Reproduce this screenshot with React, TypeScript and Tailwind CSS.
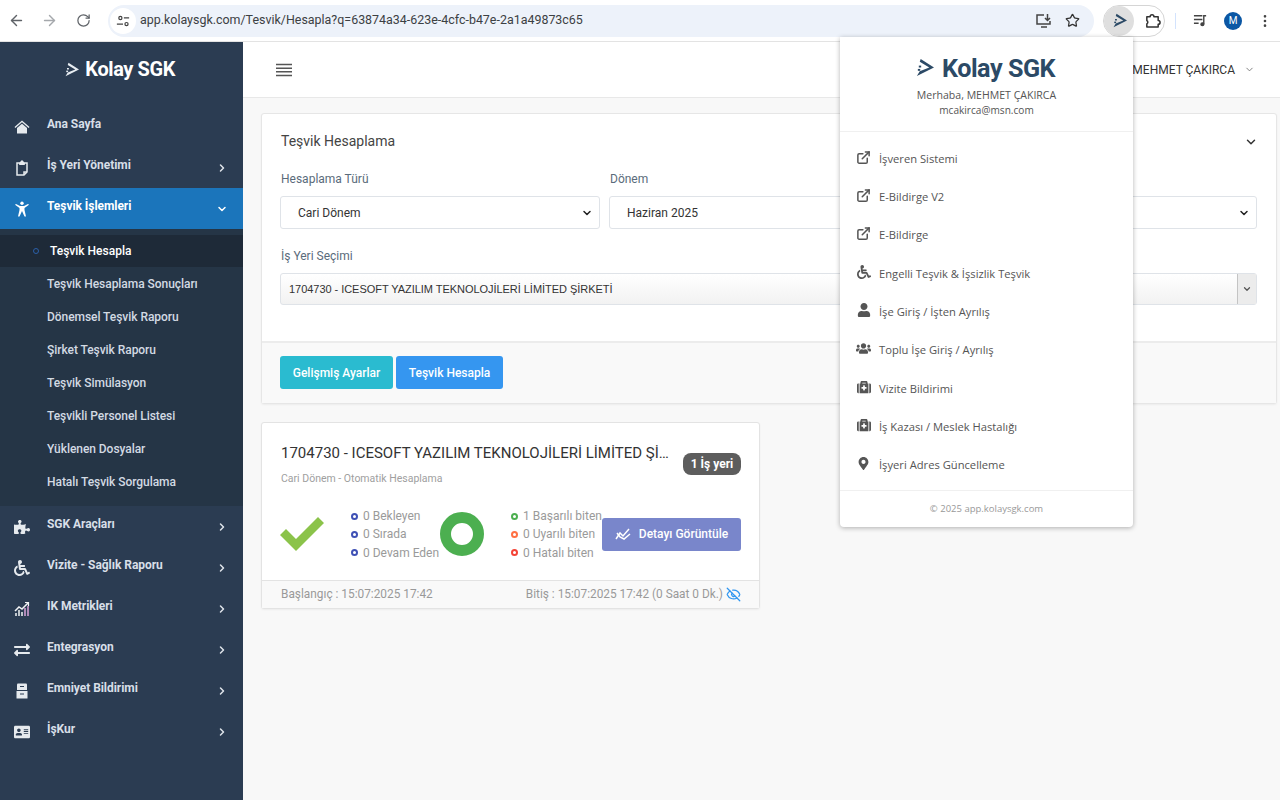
import React from "react";
import {
  ArrowLeft,
  ArrowRight,
  RotateCw,
  Star,
  MoreVertical,
  ChevronDown,
  ChevronRight,
  ExternalLink,
  EyeOff,
} from "lucide-react";
import {
  FaPuzzlePiece,
  FaWheelchair,
  FaExchangeAlt,
  FaAddressCard,
  FaUser,
  FaUsers,
  FaMedkit,
  FaMapMarkerAlt,
} from "react-icons/fa";

const sans = "font-['Roboto',sans-serif]";

function LogoMark({ className }: { className: string }) {
  return (
    <svg viewBox="0 0 20 20" className={className} fill="currentColor">
      <path d="M6 1 L20 10 L2 19 L5 14 L15 10 L5 4 Z" />
      <rect x="4" y="8" width="2.500" height="2" />
      <rect x="3" y="11.500" width="2.500" height="2" />
    </svg>
  );
}

function HomeIcon({ className }: { className: string }) {
  return (
    <svg viewBox="0 0 16 16" className={className} fill="currentColor">
      <path d="M8 1.500 L15.500 8 L14.600 9 L8 3.300 L1.400 9 L.5 8 Z" />
      <path d="M3 9 L8 4.800 L13 9 V14.500 H3 Z" />
    </svg>
  );
}

function ClipIcon({ className }: { className: string }) {
  return (
    <svg viewBox="0 0 16 16" className={className} fill="none" stroke="currentColor" strokeWidth="1.500">
      <path d="M5 3H3v12h7l3-3V3h-2" />
      <path d="M10 15v-3h3" />
      <path d="M5.500 4.500V2.500h1.500V1h2v1.500h1.500v2z" fill="currentColor" strokeWidth="1" />
    </svg>
  );
}

function PersonIcon({ className }: { className: string }) {
  return (
    <svg viewBox="0 0 16 16" className={className} fill="currentColor">
      <circle cx="8" cy="2.200" r="1.700" />
      <path d="M1 3.800 L2 3 L6 5 H10 L14 3 L15 3.800 L10.500 7 V9 L12 15.500 H10.500 L8 10 L5.500 15.500 H4 L5.500 9 V7 Z" />
    </svg>
  );
}

function ChartIcon({ className }: { className: string }) {
  return (
    <svg viewBox="0 0 16 16" className={className} fill="none">
      <path d="M1 10 L5 6 L8 8 L14 2" stroke="#f1f3f5" strokeWidth="1.500" />
      <path d="M11 1.500h3.500V5" stroke="#f1f3f5" strokeWidth="1.200" />
      <path d="M2 15v-3M5 15V9M8 15v-4" stroke="#f1f3f5" strokeWidth="1.500" />
      <path d="M11 15V7M14 15V5" stroke="#d9a3d9" strokeWidth="1.500" />
    </svg>
  );
}

function SafeIcon({ className }: { className: string }) {
  return (
    <svg viewBox="0 0 16 16" className={className} fill="currentColor">
      <path d="M3 1.500 Q3 .5 4 .5 H12 Q13 .5 13 1.500 V7 H3 Z" />
      <path d="M2.500 8 H13.500 V15.500 H2.500 Z" />
      <path d="M6 3.500h4M6 11h4" stroke="#2b3c52" strokeWidth="1.200" />
    </svg>
  );
}

function ZigzagIcon({ className }: { className: string }) {
  return (
    <svg viewBox="0 0 16 16" className={className} fill="none" stroke="currentColor" strokeWidth="1.500">
      <path d="M1 13 L5 7 L8 10 L14 3" />
      <path d="M2 7 L5 11 L9 13 L15 8" />
    </svg>
  );
}

function Bar() {
  return (
    <div className="h-[42px] bg-white border-b border-[#e3e3e3] flex items-center shrink-0 font-['Roboto',sans-serif]">
      <ArrowLeft className="w-[17px] h-[17px] ml-[8px] text-[#5f6368]" />
      <ArrowRight className="w-[17px] h-[17px] ml-[16px] text-[#a5a8ac]" />
      <RotateCw className="w-[15px] h-[15px] ml-[18px] text-[#5f6368]" />
      <div className="ml-[17px] w-[986px] h-[32px] rounded-full bg-[#edf2fa] flex items-center">
        <div className="w-[26px] h-[26px] ml-[2px] rounded-full bg-white flex items-center justify-center">
          <svg viewBox="0 0 16 16" className="w-[14px] h-[14px] text-[#444]" fill="none" stroke="currentColor" strokeWidth="1.400">
            <circle cx="5" cy="4.500" r="1.800" />
            <path d="M9 4.500h6M1 11.500h7" />
            <circle cx="12" cy="11.500" r="1.800" />
          </svg>
        </div>
        <span className="ml-[4px] text-[12.450px] text-[#3c4043]">
          app.kolaysgk.com/Tesvik/Hesapla?q=63874a34-623e-4cfc-b47e-2a1a49873c65
        </span>
        <svg viewBox="0 0 18 18" className="w-[18px] h-[18px] ml-auto text-[#444]" fill="none" stroke="currentColor" strokeWidth="1.500">
          <path d="M9 3H2v9h13V9M6 15h6M12.500 2v6M10 6l2.500 2.500L15 6" />
        </svg>
        <Star className="w-[15px] h-[15px] ml-[12px] mr-[14px] text-[#333]" strokeWidth={2} />
      </div>
      <div className="ml-[9px] w-[62px] h-[32px] rounded-full border border-[#d5d5d5] flex items-center">
        <div className="w-[30px] h-[30px] rounded-full bg-[#dfdfdf] flex items-center justify-center text-[#2c4a66]">
          <LogoMark className="w-[15px] h-[15px]" />
        </div>
        <svg viewBox="0 0 18 18" className="w-[17px] h-[17px] ml-[10px] text-[#333]" fill="none" stroke="currentColor" strokeWidth="1.600" strokeLinejoin="round">
          <path d="M3 5h3.500a2 2 0 1 1 4 0H15v4a2 2 0 0 1 0 4v3H3v-3.500a2 2 0 0 0 0-3.500z" />
        </svg>
      </div>
      <div className="ml-[10px] w-px h-[16px] bg-[#d3e3fd]" />
      <svg viewBox="0 0 16 16" className="w-[15px] h-[15px] ml-[17px] text-[#444]" fill="none" stroke="currentColor" strokeWidth="1.500">
        <path d="M1 3h9M1 7h9M1 11h5M14 3h-2.500v9" />
        <circle cx="10" cy="12" r="1.500" fill="currentColor" />
      </svg>
      <div className="ml-[16px] w-[18px] h-[18px] rounded-full bg-[#0b57a4] text-white text-[10px] flex items-center justify-center">M</div>
      <MoreVertical className="w-[16px] h-[16px] ml-[15px] text-[#444]" />
    </div>
  );
}

const topItems = [
  { label: "Ana Sayfa", Icon: HomeIcon, arrow: false },
  { label: "İş Yeri Yönetimi", Icon: ClipIcon, arrow: true },
];

const subItems = [
  "Teşvik Hesaplama Sonuçları",
  "Dönemsel Teşvik Raporu",
  "Şirket Teşvik Raporu",
  "Teşvik Simülasyon",
  "Teşvikli Personel Listesi",
  "Yüklenen Dosyalar",
  "Hatalı Teşvik Sorgulama",
];

const bottomItems = [
  { label: "SGK Araçları", Icon: FaPuzzlePiece },
  { label: "Vizite - Sağlık Raporu", Icon: FaWheelchair },
  { label: "IK Metrikleri", Icon: ChartIcon },
  { label: "Entegrasyon", Icon: FaExchangeAlt },
  { label: "Emniyet Bildirimi", Icon: SafeIcon },
  { label: "İşKur", Icon: FaAddressCard },
];

function NavRow({ label, Icon, arrow }: { label: string; Icon: React.ElementType; arrow: boolean }) {
  return (
    <div className="h-[41px] flex items-center pl-[14px] pr-[15px] text-[#d8dfe8]">
      <Icon className="w-[16px] h-[16px] text-[#e6eaee] shrink-0" />
      <span className="ml-[17px] text-[12px] font-bold -mt-[5px] tracking-[-0.05px]">{label}</span>
      {arrow && <ChevronRight className="w-[12px] h-[12px] ml-auto text-[#dfe4ea]" strokeWidth={3} />}
    </div>
  );
}

function Sidebar() {
  return (
    <aside className={`w-[243px] shrink-0 bg-[#2b3c52] ${sans}`}>
      <div className="h-[55px] flex items-center justify-center text-white -translate-x-[1px]">
        <LogoMark className="w-[15px] h-[15px] mr-[4px] text-[#e8edf2]" />
        <span className="text-[21px] font-bold tracking-[-0.4px] scale-x-[0.95]">Kolay SGK</span>
      </div>
      <div className="pt-[9px]">
        {topItems.map((item) => (
          <NavRow key={item.label} {...item} />
        ))}
        <div className="h-[41px] flex items-center pl-[14px] pr-[15px] bg-[#1b75bb] text-white">
          <PersonIcon className="w-[16px] h-[16px] shrink-0" />
          <span className="ml-[17px] text-[12px] font-bold -mt-[5px] tracking-[-0.05px]">Teşvik İşlemleri</span>
          <ChevronDown className="w-[12px] h-[12px] ml-auto" strokeWidth={3} />
        </div>
        <div className="bg-[#253546] pt-[6px] pb-[8px]">
          <div className="h-[32px] bg-[#1e2a38] flex items-center pl-[33px] text-white">
            <span className="w-[6px] h-[6px] rounded-full border border-[#2a5fa8]" />
            <span className="ml-[11px] text-[12px] font-medium">Teşvik Hesapla</span>
          </div>
          {subItems.map((s) => (
            <div key={s} className="h-[33px] flex items-center pl-[47px] text-[12px] font-medium text-[#d3dae3] tracking-[-0.05px]">
              {s}
            </div>
          ))}
        </div>
        {bottomItems.map((item) => (
          <NavRow key={item.label} {...item} arrow />
        ))}
      </div>
    </aside>
  );
}

function Field({ label, value, className }: { label: string; value: string; className: string }) {
  return (
    <div className={className}>
      <div className="pl-[1px] text-[12px] text-[#5a6b7b] h-[17px] leading-[17px]">{label}</div>
      <div className="mt-[8px] h-[33px] rounded-[3px] border border-[#dfe3e8] bg-white flex items-center pl-[17px] pr-[6px] text-[12px] text-[#333]">
        {value}
        <ChevronDown className="w-[12px] h-[12px] ml-auto text-[#222]" strokeWidth={3} />
      </div>
    </div>
  );
}

function Dot({ color, text }: { color: string; text: string }) {
  return (
    <div className="flex items-center h-[18.300px] text-[12px] text-[#9a9a9a] whitespace-nowrap">
      <span className={`w-[7px] h-[7px] rounded-full border-2 ${color} mr-[5px]`} />
      {text}
    </div>
  );
}

function Main() {
  return (
    <main className={`flex-1 min-w-0 flex flex-col ${sans}`}>
      <div className="h-[56px] bg-white border-b border-[#e8e8e8] flex items-center px-[33px] shrink-0">
        <svg viewBox="0 0 16 14" className="w-[16px] h-[14px] text-[#555]" fill="none" stroke="currentColor" strokeWidth="1.400">
          <path d="M0 1.500h16M0 5.200h16M0 8.800h16M0 12.500h16" />
        </svg>
        <span className="ml-auto text-[12px] text-[#333]">MEHMET ÇAKIRCA</span>
        <ChevronDown className="w-[11px] h-[11px] ml-[9px] -mr-[8px] text-[#777]" />
      </div>
      <div className="flex-1 bg-[#f8f8f8] pl-[18px] pt-[15px]">
        <div className="w-[1016px] rounded-[3px] border border-[#e6e6e6] bg-white shadow-[0_1px_2px_rgba(0,0,0,0.05)]">
          <div className="pl-[18px] pr-[19px] pt-[18px] pb-[36px]">
            <div className="flex items-center h-[19px] pl-[1px]">
              <span className="text-[14px] text-[#444]">Teşvik Hesaplama</span>
              <ChevronDown className="w-[14px] h-[14px] ml-auto -mr-[1px] text-[#333]" strokeWidth={2.500} />
            </div>
            <div className="flex gap-[9px] mt-[20px]">
              <Field className="w-[320px]" label="Hesaplama Türü" value="Cari Dönem" />
              <Field className="w-[320px]" label="Dönem" value="Haziran 2025" />
              <Field className="flex-1" label="" value="" />
            </div>
            <div className="pl-[1px] text-[12px] text-[#5a6b7b] mt-[19px] h-[17px] leading-[17px]">İş Yeri Seçimi</div>
            <div className="mt-[8px] h-[32px] rounded-[3px] border border-[#dfe3e8] bg-gradient-to-b from-white to-[#f2f2f2] flex items-center pl-[8px] text-[11px] text-[#333] font-['Liberation_Sans',sans-serif] tracking-[-0.04px]">
              1704730 - ICESOFT YAZILIM TEKNOLOJİLERİ LİMİTED ŞİRKETİ
              <div className="ml-auto w-[19px] h-full border-l border-[#c4c4c4] bg-[#ececec] flex items-center justify-center">
                <ChevronDown className="w-[10px] h-[10px] text-[#555]" strokeWidth={3} />
              </div>
            </div>
          </div>
          <div className="h-[62px] pb-[1px] border-t-2 border-[#ececec] bg-[#f9f9f9] flex items-center px-[18px] gap-[3px]">
            <button className="h-[33px] w-[113px] rounded-[3px] bg-[#2abbd0] text-white text-[12px] font-medium">Gelişmiş Ayarlar</button>
            <button className="h-[33px] w-[107px] rounded-[3px] bg-[#3596f0] text-white text-[12px] font-medium">Teşvik Hesapla</button>
          </div>
        </div>

        <div className="w-[499px] mt-[18px] rounded-[3px] border border-[#e3e3e3] bg-white shadow-[0_1px_2px_rgba(0,0,0,0.05)]">
          <div className="pl-[19px] pr-[18px] pt-[19px] h-[157px]">
            <div className="flex items-start">
              <div className="w-[394px] min-w-0">
                <div className="text-[15px] leading-[22px] text-[#333] truncate">1704730 - ICESOFT YAZILIM TEKNOLOJİLERİ LİMİTED ŞİRKETİ</div>
                <div className="text-[10.500px] text-[#a0a0a0] mt-[7px] leading-[16px]">Cari Dönem - Otomatik Hesaplama</div>
              </div>
              <span className="ml-auto mt-[11px] h-[22px] w-[58px] rounded-[8px] bg-[#5d5d5d] text-white text-[12px] font-bold flex items-center justify-center">1 İş yeri</span>
            </div>
            <div className="flex items-center mt-[20px]">
              <svg viewBox="0 0 44 34" className="w-[44px] h-[34px] -ml-[1px] text-[#8bc34a]" fill="currentColor">
                <path d="M0 18 L6 12 L16 22 L38 0 L44 6 L16 34 Z" />
              </svg>
              <div className="ml-[27px] w-[89px]">
                <Dot color="border-[#3f51b5]" text="0 Bekleyen" />
                <Dot color="border-[#3f51b5]" text="0 Sırada" />
                <Dot color="border-[#3f51b5]" text="0 Devam Eden" />
              </div>
              <div className="w-[44px] h-[44px] rounded-full border-[11px] border-[#4caf50]" />
              <div className="ml-[27px] w-[91px]">
                <Dot color="border-[#4caf50]" text="1 Başarılı biten" />
                <Dot color="border-[#ff7043]" text="0 Uyarılı biten" />
                <Dot color="border-[#f44336]" text="0 Hatalı biten" />
              </div>
              <button className="ml-auto h-[33px] w-[139px] rounded-[3px] bg-[#7986cb] text-white text-[12px] font-medium flex items-center justify-center gap-[8px]">
                <ZigzagIcon className="w-[16px] h-[16px]" />
                Detayı Görüntüle
              </button>
            </div>
          </div>
          <div className="h-[28px] border-t border-[#e3e3e3] bg-[#f9f9f9] flex items-center pl-[19px] pr-[18px] text-[11.850px] text-[#999]">
            <span>Başlangıç : 15:07:2025 17:42</span>
            <span className="ml-auto">Bitiş : 15:07:2025 17:42 (0 Saat 0 Dk.)</span>
            <EyeOff className="w-[15px] h-[15px] ml-[3px] text-[#2f96f0]" />
          </div>
        </div>
      </div>
    </main>
  );
}

const popItems = [
  { label: "İşveren Sistemi", Icon: ExternalLink, size: "w-[15px] h-[15px]" },
  { label: "E-Bildirge V2", Icon: ExternalLink, size: "w-[15px] h-[15px]" },
  { label: "E-Bildirge", Icon: ExternalLink, size: "w-[15px] h-[15px]" },
  { label: "Engelli Teşvik & İşsizlik Teşvik", Icon: FaWheelchair, size: "w-[14px] h-[14px]" },
  { label: "İşe Giriş / İşten Ayrılış", Icon: FaUser, size: "w-[14px] h-[14px]" },
  { label: "Toplu İşe Giriş / Ayrılış", Icon: FaUsers, size: "w-[17px] h-[17px]" },
  { label: "Vizite Bildirimi", Icon: FaMedkit, size: "w-[14px] h-[14px]" },
  { label: "İş Kazası / Meslek Hastalığı", Icon: FaMedkit, size: "w-[14px] h-[14px]" },
  { label: "İşyeri Adres Güncelleme", Icon: FaMapMarkerAlt, size: "w-[13px] h-[13px]" },
];

function Popup() {
  return (
    <div className="absolute left-[840px] top-[37px] w-[293px] h-[490px] bg-white rounded-b-[4px] shadow-[0_1px_5px_rgba(0,0,0,0.3)] font-['Open_Sans',sans-serif] flex flex-col">
      <div className="h-[95px] border-b border-[#f0f0f0] flex flex-col items-center pt-[14px] shrink-0">
        <div className="flex items-center text-[#2c4a66] h-[33px]">
          <LogoMark className="w-[19px] h-[19px] mr-[5px]" />
          <span className={`text-[26.500px] font-bold tracking-[-0.5px] scale-x-[0.95] ${sans}`}>Kolay SGK</span>
        </div>
        <div className="text-[10.550px] text-[#555] mt-[4px] leading-[15px]">Merhaba, MEHMET ÇAKIRCA</div>
        <div className="text-[10.100px] text-[#555] leading-[15px]">mcakirca@msn.com</div>
      </div>
      <div className="flex-1 pt-[8px] pl-[16px]">
        {popItems.map(({ label, Icon, size }) => (
          <div key={label} className="h-[38.300px] flex items-center text-[11.200px] text-[#555]">
            <span className="w-[15px] flex justify-center shrink-0 -mt-[4px]">
              <Icon className={`${size} text-[#555]`} strokeWidth={Icon === ExternalLink ? 2.400 : undefined} />
            </span>
            <span className="ml-[8px]">{label}</span>
          </div>
        ))}
      </div>
      <div className="h-[37px] border-t border-[#f0f0f0] flex items-center justify-center text-[9.500px] text-[#999] shrink-0">
        © 2025 app.kolaysgk.com
      </div>
    </div>
  );
}

export default function App() {
  return (
    <div className="relative w-[1280px] h-[800px] overflow-hidden flex flex-col bg-white">
      <Bar />
      <div className="flex flex-1 min-h-0">
        <Sidebar />
        <Main />
      </div>
      <Popup />
    </div>
  );
}
